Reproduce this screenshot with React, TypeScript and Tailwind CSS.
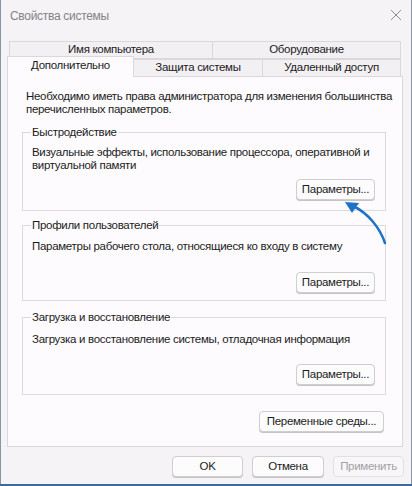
import React from "react";

const font = { fontFamily: '"Liberation Sans", Arial, sans-serif', letterSpacing: "-0.3px" };

function Btn({ children, w, disabled }: { children: React.ReactNode; w: string; disabled?: boolean }) {
  return (
    <div
      className={`${w} h-[21px] flex items-center justify-center rounded-[4px] border text-[11.5px] leading-none ${
        disabled
          ? "border-[#e2e0e2] bg-[#f8f6f8] text-[#a3a1a3]"
          : "border-[#d0ced0] bg-[#fdfcfd] text-[#1b1b1b] shadow-[0_1px_0_#c6c4c6]"
      }`}
    >
      {children}
    </div>
  );
}

function Group({
  title,
  children,
  cls,
}: {
  title: string;
  children: React.ReactNode;
  cls: string;
}) {
  return (
    <fieldset className={`ml-[14px] w-[364px] border border-[#dcdadc] ${cls}`}>
      <legend className="ml-[8px] px-[1px] text-[11.5px] leading-[14px] text-[#1b1b1b]">{title}</legend>
      {children}
    </fieldset>
  );
}

export default function App() {
  return (
    <div className="w-[412px] h-[486px] bg-[#3d6a9c] overflow-hidden" style={font}>
      <div className="relative w-[412px] h-[484px] bg-[#f6f3f6] border-l border-r border-[#8797a8]">
        {/* title bar */}
        <div className="h-[31px] flex items-center justify-between pl-[9px] pr-[9px]">
          <span className="text-[12px] text-[#858385] leading-none">Свойства системы</span>
          <svg width="12" height="12" viewBox="0 0 12 12" className="mt-[-2px]">
            <path d="M1 1 L11 11 M11 1 L1 11" stroke="#8a8e92" strokeWidth="1" />
          </svg>
        </div>

        {/* tabs */}
        <div className="mt-[10px] ml-[6px] w-[396px]">
          <div className="flex ml-[2px] h-[18px] text-[11.5px] text-[#1b1b1b]">
            <div className="w-[204px] flex items-center justify-center border border-[#dad8da] bg-[#f3f0f3] leading-none">
              Имя компьютера
            </div>
            <div className="w-[188px] flex items-center justify-center border border-l-0 border-[#dad8da] bg-[#f3f0f3] leading-none">
              Оборудование
            </div>
          </div>
          <div className="flex items-end h-[20px] -mt-[2px] text-[11.5px] text-[#1b1b1b] relative z-10 -mb-px">
            <div className="w-[127px] h-[21px] flex items-center justify-center border border-b-0 border-[#dad8da] bg-[#fdfbfd] leading-none pb-[2px]">
              Дополнительно
            </div>
            <div className="w-[129px] h-[18px] flex items-center justify-center border border-l-0 border-[#dad8da] bg-[#f3f0f3] leading-none">
              Защита системы
            </div>
            <div className="w-[138px] h-[18px] flex items-center justify-center border border-l-0 border-[#dad8da] bg-[#f3f0f3] leading-none">
              Удаленный доступ
            </div>
          </div>

          {/* panel */}
          <div className="w-[396px] h-[371px] border border-[#dad8da] bg-[#fdfbfd] flex flex-col">
            <p className="pl-[18px] pt-[13px] pr-[4px] text-[11.5px] leading-[13px] text-[#1b1b1b]">
              Необходимо иметь права администратора для изменения большинства перечисленных параметров.
            </p>

            <Group title="Быстродействие" cls="mt-[9px] pb-[10px]">
              <p className="pl-[9px] pt-[7px] pr-[4px] text-[11.5px] leading-[13px] text-[#1b1b1b]">
                Визуальные эффекты, использование процессора, оперативной и виртуальной памяти
              </p>
              <div className="flex justify-end pr-[10px] mt-[7px]">
                <Btn w="w-[79px]">Параметры...</Btn>
              </div>
            </Group>

            <Group title="Профили пользователей" cls="mt-[7px] pb-[7px]">
              <p className="pl-[9px] pt-[7px] text-[11.5px] leading-[14px] text-[#1b1b1b]">
                Параметры рабочего стола, относящиеся ко входу в систему
              </p>
              <div className="flex justify-end pr-[10px] mt-[19px]">
                <Btn w="w-[79px]">Параметры...</Btn>
              </div>
            </Group>

            <Group title="Загрузка и восстановление" cls="mt-[9px] pb-[9px]">
              <p className="pl-[9px] pt-[8px] text-[11.5px] leading-[14px] text-[#1b1b1b]">
                Загрузка и восстановление системы, отладочная информация
              </p>
              <div className="flex justify-end pr-[10px] mt-[18px]">
                <Btn w="w-[79px]">Параметры...</Btn>
              </div>
            </Group>

            <div className="flex justify-end pr-[18px] mt-[16px]">
              <Btn w="w-[125px]">Переменные среды...</Btn>
            </div>
          </div>
        </div>

        {/* bottom buttons */}
        <div className="flex justify-end gap-[9px] pr-[7px] mt-[9px]">
          <Btn w="w-[71px]">OK</Btn>
          <Btn w="w-[72px]">Отмена</Btn>
          <Btn w="w-[71px]" disabled>
            Применить
          </Btn>
        </div>

        {/* blue arrow annotation */}
        <svg className="absolute left-0 top-0 pointer-events-none" width="412" height="486">
          <path d="M384 243 C379 228 367 213 352 206" stroke="#1f72c6" strokeWidth="2.5" fill="none" strokeLinecap="round" />
          <path d="M344 202 L358 203 L351 213 Z" fill="#1f72c6" />
        </svg>
      </div>
    </div>
  );
}
